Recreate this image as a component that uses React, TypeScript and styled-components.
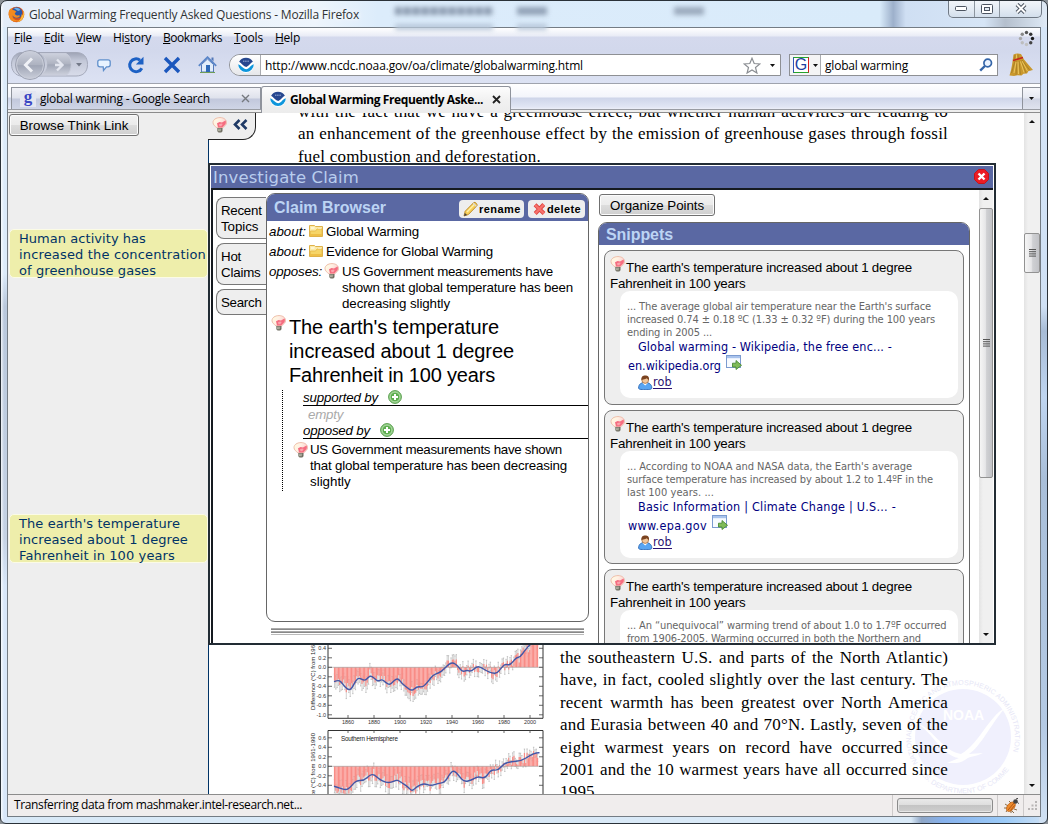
import React from "react";
import styled, { createGlobalStyle, css } from "styled-components";

const GlobalStyle = createGlobalStyle`
  *, *::before, *::after { box-sizing: border-box; }
  body { margin: 0; background: #8a9096; overflow: hidden; }
  svg { display: block; flex: none; }
`;

const arial = `"Liberation Sans", Arial, sans-serif`;
const segoe = `"Open Sans", "Segoe UI", sans-serif`;
const verdana = `"DejaVu Sans", Verdana, sans-serif`;
const tahoma = `"DejaVu Sans Condensed", Tahoma, sans-serif`;
const georgia = `"Liberation Serif", Georgia, serif`;

/* A run of text with its own tracking. */
const Txt = styled.span<{ $ls?: number }>`
  white-space: nowrap;
  letter-spacing: ${(p) => p.$ls ?? 0}px;
`;

/* ---------- window frame ---------- */

const Window = styled.div`
  width: 1048px;
  height: 824px;
  display: flex;
  flex-direction: column;
  border: 1px solid #2a3138;
  border-radius: 7px 7px 6px 6px;
  overflow: hidden;
  padding: 0 6px 6px;
  font-family: ${segoe};
  font-size: 12px;
  color: #000;
  background:
    linear-gradient(90deg, rgba(255, 255, 255, 0.8), rgba(255, 255, 255, 0) 3px) no-repeat,
    linear-gradient(180deg, #dcebfa 0, #dcebfa 30%, #b9c8dc 34%, #c5d2e4 62%, #d8e7f9 68%, #d8e7f9) 0 26px / 7px 100% no-repeat,
    linear-gradient(180deg, #d6e6f8 0, #cfe0f4 34%, #a7bcd6 37%, #bfd5f0 45%, #a9bfd9 55%, #b4cae4 85%, #d8e7f7) 100% 26px / 8px 100% no-repeat,
    linear-gradient(90deg, #d9e9f7 0 87%, #8fa6c6 88%, #86b1ec 90%, #9ccbf8 96%, #cfe1f4) 0 100% / 100% 8px no-repeat,
    linear-gradient(90deg, #e3ecf8 0, #eef5fc 30%, #dcecfb 36%, #d9ebfa 84%, #9db0cb 85.3%, #cfdff3 86.5%, #d6e5f6 94%, #b4bfcd 96%, #dfeaf6);
`;

const TitleBar = styled.div`
  position: relative;
  height: 26px;
  flex: none;
  display: flex;
  align-items: center;
  padding-left: 1px;
  gap: 4px;
  color: #2f3336;
`;

const Smudge = styled.i<{ $x: number; $y: number; $w: number; $h: number; $c: string }>`
  position: absolute;
  left: ${(p) => p.$x}px;
  top: ${(p) => p.$y}px;
  width: ${(p) => p.$w}px;
  height: ${(p) => p.$h}px;
  background: ${(p) => p.$c};
  filter: blur(2.5px);
`;

const TitleText = styled(Txt)`
  position: relative;
  text-shadow: 0 0 5px #fff, 0 0 8px #fff;
`;

const WindowButtons = styled.div`
  position: absolute;
  right: -1px;
  top: -1px;
  height: 18px;
  display: flex;
  border: 1px solid #6f7985;
  border-top: 0;
  border-radius: 0 0 5px 5px;
  background: linear-gradient(180deg, #f3f6fa, #e5ecf4 50%, #d3dfec);
  box-shadow: 0 0 1px #fff;
`;

const WindowButton = styled.span<{ $w: number }>`
  width: ${(p) => p.$w}px;
  display: grid;
  place-items: center;
  & + & { border-left: 1px solid #8c959f; }
`;

const Client = styled.div`
  flex: 1;
  min-height: 0;
  border: 1px solid #747c84;
  display: flex;
  flex-direction: column;
  background: #fff;
`;

/* ---------- menus and toolbar ---------- */

const MenuBar = styled.div`
  height: 22px;
  flex: none;
  display: flex;
  align-items: center;
  padding: 0 0 2px 6px;
  background: linear-gradient(180deg, #fff 0, #e9ecf6 8px, #d4d9ed 9px, #d2d8ec);
`;

const MenuItem = styled(Txt)<{ $w: number }>`
  width: ${(p) => p.$w}px;
  line-height: 20px;
  u { text-underline-offset: 1px; }
`;

const Toolbar = styled.div`
  height: 33px;
  flex: none;
  display: flex;
  align-items: center;
  padding: 0 4px 3px 2px;
  background: linear-gradient(180deg, #d2d8ec, #dce2f3);
`;

const Slot = styled.span<{ $l?: number }>`
  margin-left: ${(p) => p.$l ?? 0}px;
  flex: none;
`;

const AddressBox = styled.div`
  margin-left: 12px;
  width: 552px;
  height: 22px;
  flex: none;
  display: flex;
  align-items: center;
  border: 1px solid #8e9094;
  border-radius: 12px 0 0 12px;
  background: #fff;
  overflow: hidden;
`;

const SiteBadge = styled.span`
  width: 31px;
  height: 20px;
  display: grid;
  place-items: center;
  padding-left: 2px;
  border-right: 1px solid #a9abb0;
  background: linear-gradient(180deg, #fff, #e6e7ea);
`;

const Url = styled(Txt)`
  flex: 1;
  padding-left: 4px;
`;

const SearchBox = styled.div`
  margin-left: 8px;
  width: 209px;
  height: 22px;
  flex: none;
  display: flex;
  align-items: center;
  border: 1px solid #8e9094;
  background: #fff;
`;

const EnginePicker = styled.span`
  width: 31px;
  height: 20px;
  display: flex;
  align-items: center;
  gap: 4px;
  padding-left: 3px;
  border-right: 1px solid #a9abb0;
  background: #f4f4f5;
`;

const EngineLogo = styled.span`
  width: 16px;
  height: 16px;
  border: 1px solid #27a32c;
  border-right-color: #d81f1f;
  border-left-color: #2f55b8;
  background: #fff;
  color: #1d3fa0;
  font: 16px/14px ${arial};
  text-align: center;
`;

/* ---------- tabs ---------- */

const TabStrip = styled.div`
  height: 30px;
  flex: none;
  display: flex;
  align-items: flex-start;
  border-top: 1px solid #9fa3ad;
  border-bottom: 1px solid #8c8c8c;
  padding-left: 3px;
  background: linear-gradient(180deg, #fff 0, #f3f5fb 13px, #ced5e9 14px, #e1e6f4 23px, #eceff8 25px, #999ca3 25px, #999ca3 26px, #eeeeee 26px);
`;

const Tab = styled.div<{ $active?: boolean }>`
  display: flex;
  align-items: center;
  width: 250px;
  border: 1px solid #8f939c;
  border-bottom: 0;
  ${(p) =>
    p.$active
      ? css`
          height: 27px;
          margin-top: 2px;
          padding: 0 9px 2px 8px;
          border-radius: 3px 3px 0 0;
          font-weight: bold;
          background: linear-gradient(180deg, #fdfdfd, #f1f1f1 50%, #ececec);
        `
      : css`
          height: 22px;
          margin-top: 3px;
          padding: 0 10px 0 8px;
          background: linear-gradient(180deg, #f1f2f7, #dfe2ec 10px, #c2c8dc 11px, #cfd5e6);
        `}
`;

const TabLabel = styled(Txt)`
  flex: 1;
  padding-left: 4px;
`;

const TabIcon = styled.span<{ $tile?: boolean }>`
  width: 16px;
  height: 16px;
  ${(p) =>
    p.$tile &&
    css`
      background: #e4e6f0;
      color: #3b46c4;
      font: bold 17px/12px ${georgia};
      text-align: center;
    `}
`;

const AllTabs = styled.span`
  margin: 3px 0 0 auto;
  width: 18px;
  height: 22px;
  display: grid;
  place-items: center;
  border: 1px solid #8f939c;
  border-right: 0;
  border-bottom: 0;
  background: linear-gradient(180deg, #f6f7fb, #e6e9f2 10px, #d0d5e4 11px, #dfe3ee);
`;

/* ---------- page ---------- */

const Page = styled.div`
  position: relative;
  flex: 1;
  min-height: 0;
  display: flex;
  background: #fff;
`;

const Sidebar = styled.aside`
  width: 200px;
  flex: none;
  padding: 1px 0 0 1px;
  background: #eee;
`;

const NativeButton = styled.button<{ $w: number }>`
  display: block;
  width: ${(p) => p.$w}px;
  height: 22px;
  padding: 2px 0 0;
  border: 1px solid #707070;
  border-radius: 3px;
  box-shadow: inset 0 0 0 1px #fcfcfc;
  background: linear-gradient(180deg, #f2f2f2, #ebebeb 50%, #ddd 50%, #cfcfcf);
  font: 13.333px/18px ${arial};
  color: #000;
`;

const Note = styled.div<{ $gap: number }>`
  margin-top: ${(p) => p.$gap}px;
  width: 199px;
  height: 49px;
  padding: 1px 0 0 9px;
  display: flex;
  flex-direction: column;
  border: 1px solid #fbfbe6;
  border-radius: 5px;
  background: #eeeeab;
  color: #003366;
  font: 13px/16px ${verdana};
`;

const Article = styled.main`
  position: relative;
  width: 816px;
  flex: none;
  overflow: hidden;
  border-left: 1px solid #003366;
  padding-left: 89px;
  display: flex;
  flex-direction: column;
  font: 17px/22.4px ${georgia};
`;

const SidebarToggle = styled.div`
  position: absolute;
  left: 200px;
  top: 0;
  width: 48px;
  height: 27px;
  display: flex;
  align-items: center;
  gap: 5px;
  padding: 0 0 3px 4px;
  border-right: 1px solid #222;
  border-bottom: 1px solid #222;
  border-radius: 0 0 13px 0;
  background: #eee;
`;

const Lead = styled.div`
  margin-top: -12px;
  width: 650px;
  height: 543px;
  flex: none;
`;

const Line = styled.div<{ $last?: boolean }>`
  position: relative;
  letter-spacing: 0.2px;
  white-space: nowrap;
  text-align: justify;
  text-align-last: ${(p) => (p.$last ? "left" : "justify")};
`;

const FigureRow = styled.div`
  flex: none;
  display: flex;
  margin-left: -8px;
`;

const Column = styled.div`
  width: 388px;
  margin-left: 8px;
  padding-top: 3px;
`;

const Watermark = styled.div`
  position: absolute;
  left: 695px;
  top: 565px;
`;

const ScrollBar = styled.div<{ $w: number }>`
  width: ${(p) => p.$w}px;
  flex: none;
  display: flex;
  flex-direction: column;
  justify-content: space-between;
  align-items: center;
  background: linear-gradient(90deg, #e3e3e3, #f0f0f0 4px, #f0f0f0);
`;

const ScrollTrack = styled.div<{ $offset: number }>`
  flex: 1;
  width: 100%;
  padding-top: ${(p) => p.$offset}px;
`;

const ScrollThumb = styled.div<{ $h: number }>`
  height: ${(p) => p.$h}px;
  width: 100%;
  display: grid;
  place-items: center;
  border: 1px solid #929292;
  border-radius: 2px;
  background: linear-gradient(90deg, #f5f5f5, #e6e6e8 45%, #cfd0d3 55%, #c2c3c7);
`;

const ArrowCell = styled.span<{ $h: number }>`
  height: ${(p) => p.$h}px;
  display: grid;
  place-items: center;
`;

const StatusBar = styled.div`
  height: 22px;
  flex: none;
  display: flex;
  align-items: stretch;
  border-top: 1px solid #8c8c8c;
  background: #f0eded;
  line-height: 19px;
`;

const StatusText = styled(Txt)`
  flex: 1;
  padding-left: 6px;
`;

const StatusCell = styled.span<{ $w: number }>`
  width: ${(p) => p.$w}px;
  display: grid;
  place-items: center;
  border-left: 1px solid #cdcaca;
`;

const ProgressBar = styled.span`
  width: 96px;
  height: 15px;
  margin-bottom: 1px;
  border: 1px solid #8b8b8b;
  border-radius: 3px;
  box-shadow: inset 0 0 0 1px #e6e6e6;
  background: linear-gradient(180deg, #e9e9e9, #dedede 45%, #c4c4c4 50%, #cecece);
`;

/* ---------- claim dialog ---------- */

const Dialog = styled.section`
  position: absolute;
  left: 200px;
  top: 50px;
  width: 788px;
  height: 482px;
  display: flex;
  flex-direction: column;
  padding: 1px 1px 0;
  border: 2px solid #222c34;
  background: #fff;
  font: 13.333px/16px ${arial};
`;

const DialogTitle = styled.header`
  height: 22px;
  flex: none;
  display: flex;
  align-items: center;
  justify-content: space-between;
  padding: 0 4px 0 2px;
  background: #5a68a3;
  color: #b9cdee;
  font: 16.5px/22px ${verdana};
`;

const DialogBody = styled.div`
  flex: 1;
  min-height: 0;
  display: flex;
  border: solid #151a20;
  border-width: 2px 0 0 2px;
`;

const SideTabs = styled.nav`
  width: 53px;
  flex: none;
  padding: 7px 0 0 3px;
  display: flex;
  flex-direction: column;
  gap: 4px;
`;

const SideTab = styled.div`
  display: flex;
  flex-direction: column;
  padding: 5px 0 3px 4px;
  border: 1px solid #777;
  border-right: 0;
  border-radius: 8px 0 0 8px;
  background: #eee;
`;

const BrowserColumn = styled.div`
  width: 323px;
  flex: none;
  padding-top: 3px;
`;

const Panel = styled.div<{ $h?: number }>`
  height: ${(p) => (p.$h ? p.$h + "px" : "auto")};
  border: 1px solid #666;
  border-radius: 9px;
  overflow: hidden;
  background: #fff;
`;

const PanelHead = styled.div<{ $h: number; $t?: number }>`
  height: ${(p) => p.$h}px;
  display: flex;
  align-items: center;
  gap: 4px;
  padding: ${(p) => p.$t ?? 0}px 3px 0 7px;
  background: #5a68a3;
  color: #bcd4f4;
  font-size: 16px;
  font-weight: bold;
`;

const PanelTitle = styled(Txt)`
  flex: 1;
`;

const HeadButton = styled.span<{ $w: number }>`
  width: ${(p) => p.$w}px;
  height: 18px;
  margin-top: 3px;
  display: flex;
  align-items: center;
  padding-left: 4px;
  border-radius: 4px;
  background: #eee;
  color: #000;
  font-size: 11px;
  line-height: 16px;
`;

const Relation = styled.div<{ $h: number }>`
  height: ${(p) => p.$h}px;
  display: flex;
  padding: 3px 0 0 2px;
`;

const RelationName = styled(Txt)<{ $w: number }>`
  width: ${(p) => p.$w}px;
  font-style: italic;
`;

const Stack = styled.span<{ $l?: number }>`
  display: flex;
  flex-direction: column;
  align-items: flex-start;
  padding-left: ${(p) => p.$l ?? 0}px;
`;

const Claim = styled.div`
  display: flex;
  padding: 2px 0 0 4px;
  font-size: 20px;
  line-height: 24px;
`;

const Arguments = styled.div`
  margin: 3px 0 0 15px;
  height: 101px;
  border-left: 1px dotted #000;
`;

const ArgumentHead = styled.div<{ $h: number }>`
  margin-left: 20px;
  height: ${(p) => p.$h}px;
  display: flex;
  align-items: flex-end;
  gap: 10px;
  border-bottom: 1px solid #000;
  font-style: italic;
  line-height: 14px;
`;

const Empty = styled.div`
  height: 17px;
  padding-left: 25px;
  color: #aaa;
  font-style: italic;
  line-height: 18px;
`;

const ArgumentClaim = styled.div`
  display: flex;
  padding: 3px 0 0 10px;
`;

const Grip = styled.div`
  margin: 6px 5px 0;
  height: 7px;
  background: linear-gradient(180deg, #aaa 0 1px, #888 1px 2px, #fff 2px 3px, #aaa 3px 4px, #888 4px 5px, #fff 5px 6px, #bbb 6px);
`;

const SnippetColumn = styled.div`
  flex: 1;
  min-width: 0;
  overflow: hidden;
  padding: 4px 9px 0;
`;

const ButtonRow = styled.div`
  height: 28px;
  padding-left: 1px;
`;

const Cards = styled.div`
  display: flex;
  flex-direction: column;
  gap: 5px;
  padding: 5px 5px 0;
`;

const Card = styled.article<{ $h: number }>`
  height: ${(p) => p.$h}px;
  padding: 9px 5px 0;
  border: 1px solid #777;
  border-radius: 8px;
  background: #eee;
  display: flex;
  flex-direction: column;
`;

const CardTitle = styled.div`
  display: flex;
  height: 16px;
`;

const Quote = styled.div`
  height: 107px;
  margin: -1px 0 0 10px;
  padding: 9px 0 0 7px;
  border-radius: 10px;
  background: #fff;
  display: flex;
  flex-direction: column;
  font-family: ${tahoma};
  color: #666;
  font-size: 11px;
  line-height: 13px;
`;

const Source = styled.div<{ $h: number; $l: number }>`
  height: ${(p) => p.$h}px;
  padding-left: ${(p) => p.$l}px;
  display: flex;
  align-items: flex-end;
  color: #000080;
  font-size: 12.5px;
  line-height: 16px;
  u { color: #2b1170; text-underline-offset: 2px; }
`;

const Lift = styled.span<{ $t?: number; $b?: number; $l?: number; $r?: number }>`
  margin: ${(p) => p.$t ?? 0}px ${(p) => p.$r ?? 0}px ${(p) => p.$b ?? 0}px ${(p) => p.$l ?? 0}px;
  flex: none;
`;

/* ---------- icons ---------- */

const Bulb = () => (
  <svg width="16" height="16" viewBox="0 0 16 16">
    <defs>
      <linearGradient id="glass" x1="0" y1=".2" x2="1" y2=".6">
        <stop offset="0" stopColor="#fffbe0" />
        <stop offset=".45" stopColor="#fff0e4" />
        <stop offset="1" stopColor="#fbc9c9" />
      </linearGradient>
    </defs>
    <path d="M8 .6C4 .6 1 2.700 1 5.500c0 2.500 1.900 3.500 3.900 5.300h5.800c1.700-1.800 3.800-2.700 3.800-5.300C14.500 2.600 11.800.6 8 .6z" fill="url(#glass)" stroke="#ecb7a4" strokeWidth=".9" />
    <path d="M5 6.200l2.600-1.100 2.400.5 3.500-2c.9 1.800.3 3.500-.9 4.500L10.300 10.600H6z" fill="#f56d80" />
    <path d="M7 7.200l2.300-.6 1.400.5-1.400 2.200H7.500z" fill="#fba5ad" />
    <path d="M5.300 11h5.200v3.200l-1.200 1.300H6.600l-1.300-1.300z" fill="#6e6d60" />
    <path d="M5.800 12.200h3.400M5.800 13.700h3" stroke="#cfcfbf" strokeWidth=".8" />
  </svg>
);

const Folder = () => (
  <svg width="14" height="12" viewBox="0 0 14 12">
    <path d="M.5.500h5l1 1h7v10H.5z" fill="#fbeaa6" stroke="#dfb14a" />
    <path d="M2 3h3.500M9 3.500h3" stroke="#fff" />
    <path d="M1.500 6h5l1.500-2h5v7h-11.500z" fill="#f6d568" stroke="#e2b443" strokeWidth=".7" />
    <path d="M1 9h12v2H1z" fill="#eebf48" />
  </svg>
);

const Plus = () => (
  <svg width="14" height="14" viewBox="0 0 14 14">
    <circle cx="7" cy="7" r="6.400" fill="#8cc97e" stroke="#5a9f50" />
    <circle cx="7" cy="7" r="4.900" fill="#5eae50" stroke="#b9e0b0" strokeWidth=".9" />
    <path d="M7 4v6M4 7h6" stroke="#fff" strokeWidth="2" />
  </svg>
);

const Pencil = () => (
  <svg width="16" height="16" viewBox="0 0 16 16">
    <path d="M1 15l1.200-4.800L10.800 1.500c1.300-.8 3.900 1.600 3.200 3.200L5.400 13.500z" fill="#f7cf57" stroke="#b98522" strokeWidth=".9" />
    <path d="M4 11L11.500 3.200" stroke="#fff0a8" strokeWidth="1.400" />
    <path d="M10.200 2.200l3.200 3.200" stroke="#d8d8d8" strokeWidth="1.300" />
    <path d="M1 15l.9-3 2.200 2.100z" fill="#444" />
  </svg>
);

const RedCross = () => (
  <svg width="15" height="14" viewBox="0 0 15 14">
    <path d="M3 2.800l9 8.700M11.800 2.500l-8.600 9" stroke="#dc4540" strokeWidth="4" />
    <path d="M3 2.800l9 8.700M11.800 2.500l-8.600 9" stroke="#f8726c" strokeWidth="2.400" />
  </svg>
);

const CloseBadge = () => (
  <svg width="15" height="15" viewBox="0 0 15 15">
    <path d="M4.500.5h6l4 4v6l-4 4h-6l-4-4v-6z" fill="#ec1c24" stroke="#c4141c" />
    <path d="M4.500 4.500l6 6M10.500 4.500l-6 6" stroke="#fff" strokeWidth="2.400" />
  </svg>
);

const OpenPage = () => (
  <svg width="16" height="15" viewBox="0 0 16 15">
    <rect x=".5" y=".5" width="14" height="12" fill="#f7fbff" stroke="#7b9bd0" />
    <path d="M1 1h13v2.200H1z" fill="#a9c3ec" />
    <path d="M6.500 8.200h3.500V5.500l5.500 4.800-5.500 4.200V12H6.500z" fill="#7fbb58" stroke="#4a8a35" strokeWidth=".9" />
  </svg>
);

const Person = () => (
  <svg width="15" height="15" viewBox="0 0 15 15">
    <path d="M.6 13c0-3.800 2.500-5.500 6.400-5.500s6.800 1.700 6.800 5.500c0 1.400-1.800 1.600-6.600 1.600S.6 14.400.6 13z" fill="#5aa5f2" stroke="#2c68b4" strokeWidth=".9" />
    <path d="M4.500 8l2.700 2.500L9.900 8z" fill="#fff" />
    <circle cx="7.200" cy="5" r="3.400" fill="#f3c79b" stroke="#9b6236" strokeWidth=".7" />
    <path d="M3.400 5C3 1.800 4.800.4 7.300.4S11.500 1.800 11 5C9.600 4.300 9 3.200 9 3.200S6 4.300 3.400 5z" fill="#7b4320" />
  </svg>
);

const Noaa = ({ size = 16 }: { size?: number }) => (
  <svg width={size} height={size} viewBox="0 0 16 16">
    <circle cx="8" cy="8" r="7.900" fill="#fff" />
    <path d="M1.100 4.800a7.800 7.800 0 0 1 13.800 0C12.500 6 11.300 8.600 8.300 10 5.800 9.600 3.200 6 1.100 4.800z" fill="#26478f" />
    <path d="M.2 7.200C3 8 5.200 12 8.300 12.200c2.800 0 3.800-3.900 7.500-5A7.800 7.800 0 1 1 .2 7.200z" fill="#0e96dc" />
    <path d="M5 4.200h6" stroke="#9fb4de" strokeWidth="1" strokeDasharray="1.200 .5" />
  </svg>
);

const Firefox = () => (
  <svg width="17" height="17" viewBox="0 0 17 17">
    <circle cx="8.500" cy="8.500" r="7.800" fill="#d9541a" />
    <circle cx="8.800" cy="6.800" r="5.500" fill="#2b59a8" />
    <path d="M6 2.200c2-.8 5-.3 6.500 1.800L10 5z" fill="#6fb1e8" />
    <path d="M1 4.500C2 3 3 2.200 3.600 2.200L4.600 4c1.500-.3 2.600.6 4 1.800L6.800 7c0 2 1.600 2.800 3.300 2.400 1.200-.3 2.400.3 1.400 1.400C10 12.300 6.300 12.200 4.600 9.400 4.200 13 8 15 11.200 14 9 16.500 4 16.200 1.800 12.500.5 10 .3 7 1 4.500z" fill="#f28a1e" />
    <path d="M14.500 3.500c2 3 2 7-.2 9.800-1.300 1.700-3.500 2.800-5.600 2.700 3-1.200 5.200-3.800 4.900-7.700.9.700 1 1 1.200 1.500.4-2.200.3-4.300-.3-6.300z" fill="#fac33c" />
  </svg>
);

const BackForward = () => (
  <svg width="79" height="32" viewBox="0 0 79 32">
    <defs>
      <linearGradient id="pill" x2="0" y2="1">
        <stop offset="0" stopColor="#9ea4b5" />
        <stop offset=".35" stopColor="#c3c8d8" />
        <stop offset="1" stopColor="#d8dcea" />
      </linearGradient>
      <linearGradient id="disc" x2="0" y2="1">
        <stop offset="0" stopColor="#cdd1dd" />
        <stop offset=".5" stopColor="#adb2c0" />
        <stop offset=".52" stopColor="#a0a6b6" />
        <stop offset="1" stopColor="#ccd0dc" />
      </linearGradient>
    </defs>
    <path d="M12 3.500h54c8 0 11.500 5 11.500 12s-4 11.500-11.500 11.500H12C-2 27-2 3.500 12 3.500z" fill="url(#pill)" stroke="#a4a9ba" />
    <path d="M30 4.500h26c7 3 7 19 0 21.500H30c9-4 9-17 0-21.500z" fill="url(#disc)" stroke="#c9cddb" />
    <circle cx="20" cy="16" r="14.500" fill="url(#disc)" stroke="#9da2b2" />
    <circle cx="20" cy="16" r="13.400" fill="none" stroke="#c9cdd9" />
    <path d="M22 9.500L15.500 16l6.500 6.500" fill="none" stroke="#eff1f6" strokeWidth="3" />
    <path d="M47 10.500l5.500 5.500-5.500 5.500M45 16h6" fill="none" stroke="#e3e6ef" strokeWidth="2.400" />
    <path d="M66 14h6l-3 3.500z" fill="#737988" />
  </svg>
);

const Bubble = () => (
  <svg width="14" height="13" viewBox="0 0 14 13">
    <path d="M3 .8h8c1.400 0 2.200.8 2.200 2v3c0 1.300-.8 2-2.200 2H9.500L6.500 11.500 6.200 7.800H3C1.600 7.800.8 7 .8 5.800v-3C.8 1.600 1.600.8 3 .8z" fill="#e8f3ff" stroke="#5f8fcb" strokeWidth="1.300" />
  </svg>
);

const Reload = () => (
  <svg width="18" height="18" viewBox="0 0 18 18">
    <path d="M14.800 12.200A6.400 6.400 0 1 1 13 4.200" fill="none" stroke="#1d61c4" strokeWidth="3" />
    <path d="M16.500.8v7.700H8.800z" fill="#1d61c4" />
  </svg>
);

const Stop = () => (
  <svg width="18" height="18" viewBox="0 0 18 18">
    <path d="M2 2l14 14M16 2L2 16" stroke="#1b57bd" strokeWidth="3.400" />
  </svg>
);

const Home = () => (
  <svg width="19" height="18" viewBox="0 0 19 18">
    <path d="M3.500 8.500V16h12V8.500l-6-5.500z" fill="#e2edfa" stroke="#5378b8" />
    <path d="M.8 9.800l8.700-8.600 8.700 8.600" fill="none" stroke="#5b86c8" strokeWidth="1.800" />
    <path d="M13.500 1.500h2v4l-2-2z" fill="#5378b8" />
    <path d="M8 9h4v7H8z" fill="#2e69b8" />
    <path d="M2 16.500h15" stroke="#6f9d55" />
  </svg>
);

const Star = () => (
  <svg width="18" height="17" viewBox="0 0 18 17">
    <path d="M9 1.200l2.200 5.300 5.700.4-4.400 3.600 1.400 5.500L9 13l-4.900 3 1.400-5.500L1.100 6.900l5.700-.4z" fill="#fff" stroke="#8b8e93" strokeWidth="1.200" />
  </svg>
);

const Caret = ({ size = 5, up, color = "#111" }: { size?: number; up?: boolean; color?: string }) => (
  <svg width={size} height="3" viewBox="0 0 6 3" preserveAspectRatio="none">
    <path d={up ? "M0 3h6L3 0z" : "M0 0h6L3 3z"} fill={color} />
  </svg>
);

const Magnifier = () => (
  <svg width="14" height="14" viewBox="0 0 14 14">
    <circle cx="8.700" cy="5" r="3.800" fill="#eaf3ff" stroke="#3465a8" strokeWidth="1.700" />
    <path d="M5.900 8L1.200 12.600" stroke="#3465a8" strokeWidth="2.400" />
  </svg>
);

const Broom = () => (
  <svg width="25" height="24" viewBox="0 0 25 24">
    <path d="M4.500 1.500C7 .2 9.500.2 12 1l3 5.500 9 10.500-4.500 1.100-1.500 2.400-3.500.2-2 1.800-4-.3-3.500.8-4.500-.5C3 15 3.500 8 4.500 1.500z" fill="#c9982d" />
    <path d="M6 8L2.500 20M8 8L7 22M10 8l1.500 13.500M12 7.500l5 12.500M13 7l8 10.500M6 2l-.5 4M9 1.500l.5 4" stroke="#9a7320" strokeWidth=".6" />
    <path d="M7 9l-2 11M9 8.500L9.500 21M11.500 8.500l3.500 11M13 8l5.500 10M7.500 1.500v4" stroke="#edca62" strokeWidth=".9" />
    <path d="M4 7.500l10-3" stroke="#c5261c" strokeWidth="1.500" />
  </svg>
);

const spinnerShades = ["#555", "#333", "#1a1a1a", "#444", "#c2c2c2", "#bdbdbd", "#aaa", "#888"];
const Spinner = () => (
  <svg width="17" height="17" viewBox="0 0 17 17">
    {spinnerShades.map((shade, i) => {
      const a = (i * Math.PI) / 4 - Math.PI / 2;
      return <circle key={i} cx={8.500 + 6 * Math.cos(a)} cy={8.500 + 6 * Math.sin(a)} r="1.700" fill={shade} />;
    })}
  </svg>
);

const TabX = ({ dark }: { dark?: boolean }) => (
  <svg width="9" height="9" viewBox="0 0 9 9">
    <path d="M1 1l7 7M8 1L1 8" stroke={dark ? "#222" : "#75797f"} strokeWidth={dark ? 1.800 : 1.400} />
  </svg>
);

const DoubleChevron = () => (
  <svg width="15" height="11" viewBox="0 0 15 11">
    <path d="M6.500 1L2 5.500 6.500 10M13.500 1L9 5.500l4.500 4.500" fill="none" stroke="#1f3a66" strokeWidth="2.600" />
  </svg>
);

const GripLines = () => (
  <svg width="7" height="8" viewBox="0 0 7 8">
    <path d="M0 .5h7M0 2.700h7M0 4.900h7M0 7.100h7" stroke="#555" strokeWidth="1" />
  </svg>
);

const Bug = () => (
  <svg width="16" height="16" viewBox="0 0 16 16">
    <path d="M2 6l3 2M1 10h3M3 14l2-3M8 15l0-3M6 3l2 2M11 11l3 1M9 13l2 2" stroke="#8b6b45" strokeWidth="1" />
    <path d="M3.500 11.500C3 8.500 6 4.500 9.500 4c2.500 0 3.500 2 2.500 4.500s-3.500 4.800-6 5c-1.500 0-2.300-.8-2.500-2z" fill="#ee8a2c" stroke="#b85e14" strokeWidth=".7" />
    <path d="M5 12l6-7M7.500 12.500l4-5" stroke="#a04a10" strokeWidth=".8" />
    <circle cx="12.500" cy="3.500" r="2.300" fill="#444" />
    <path d="M13 1l2-.5M14.500 4.500l1.300 1" stroke="#333" />
  </svg>
);

const ResizeGrip = () => (
  <svg width="11" height="11" viewBox="0 0 11 11">
    <path d="M8 1h2v2H8zM8 4.500h2v2H8zM4.500 4.500h2v2h-2zM8 8h2v2H8zM4.500 8h2v2h-2zM1 8h2v2H1z" fill="#b8b5b5" />
  </svg>
);

/* ---------- temperature charts ---------- */

type Pt = [number, number];

/* Smoothed anomaly curves: x in chart pixels, y in degrees Celsius. */
const northern: Pt[] = [
  [44, -0.3], [48, -0.27], [51, -0.3], [55, -0.42], [59, -0.48], [62, -0.44], [66, -0.27], [69, -0.22], [73, -0.27], [76, -0.27],
  [80, -0.17], [84, -0.22], [88, -0.3], [92, -0.25], [96, -0.33], [100, -0.37], [104, -0.28], [108, -0.23], [112, -0.34],
  [117, -0.43], [122, -0.5], [127, -0.4], [133, -0.42], [138, -0.3], [143, -0.16], [149, -0.12], [154, -0.04], [159, 0.07],
  [163, 0.1], [168, 0.03], [172, -0.1], [177, -0.06], [181, -0.09], [187, 0.02], [191, 0], [196, -0.07], [202, -0.12],
  [207, -0.13], [211, -0.02], [215, 0.07], [220, 0.04], [226, 0.2], [230, 0.21], [235, 0.36], [240, 0.48], [244, 0.54], [248, 0.62], [252, 0.66],
];
const southern: Pt[] = [
  [44, -0.42], [50, -0.46], [56, -0.5], [60, -0.45], [66, -0.3], [74, -0.3], [80, -0.18], [84, -0.17], [89, -0.27], [96, -0.34],
  [101, -0.34], [107, -0.28], [112, -0.35], [118, -0.43], [122, -0.53], [127, -0.42], [134, -0.36], [141, -0.41], [148, -0.36],
  [155, -0.34], [160, -0.15], [164, -0.08], [169, -0.2], [174, -0.33], [182, -0.29], [188, -0.21], [195, -0.26], [201, -0.07],
  [208, -0.09], [214, 0.06], [220, 0.09], [232, 0.12], [240, 0.23], [247, 0.29], [252, 0.28],
];

const sample = (pts: Pt[], x: number) => {
  const i = Math.max(1, pts.findIndex((p) => p[0] >= x));
  const [x0, y0] = pts[i - 1];
  const [x1, y1] = pts[i];
  return y0 + ((y1 - y0) * (x - x0)) / (x1 - x0);
};

const smooth = (pts: Pt[], y: (v: number) => number) => {
  let d = `M${pts[0][0]} ${y(pts[0][1])}`;
  for (let i = 1; i < pts.length - 1; i++) {
    d += `Q${pts[i][0]} ${y(pts[i][1])} ${(pts[i][0] + pts[i + 1][0]) / 2} ${y((pts[i][1] + pts[i + 1][1]) / 2)}`;
  }
  return d;
};

const noise = (n: number) => {
  const v = Math.sin(n * 12.9898) * 43758.5453;
  return v - Math.floor(v) - 0.5;
};

const Series = ({ pts, zero, seed }: { pts: Pt[]; zero: number; seed: number }) => {
  const y = (v: number) => zero - v * 47.500;
  const years = Array.from({ length: 156 }, (_, i) => i);
  return (
    <g>
      {years.map((i) => {
        const x = 44.500 + i * 1.31;
        const v = sample(pts, x) + noise(i + seed) * 0.26;
        const err = 0.14 - i * 0.0004;
        return (
          <g key={i}>
            <path d={`M${x} ${y(v + err)}V${y(v - err)}`} stroke="#d2d2d2" strokeWidth="1" />
            <path d={`M${x - 0.7} ${y(v + err)}h1.400M${x - 0.7} ${y(v - err)}h1.400`} stroke="#999" strokeWidth=".5" />
            <path d={`M${x} ${zero}V${y(v)}`} stroke="#f98c86" strokeWidth="1.200" />
          </g>
        );
      })}
      <path d={`M38 ${zero}H252`} stroke="#999" strokeWidth=".6" />
      <path d={smooth(pts, y)} fill="none" stroke="#4257a8" strokeWidth="1.400" />
    </g>
  );
};

const Ticks = ({ zero, values }: { zero: number; values: number[] }) => (
  <g fontFamily={arial} fontSize="5.500" fill="#333">
    {values.map((v) => {
      const y = zero - v * 47.500;
      return (
        <g key={v}>
          <path d={`M38 ${y}h4M249 ${y}h4`} stroke="#444" strokeWidth=".8" />
          <text x="36" y={y + 2} textAnchor="end">{v.toFixed(1)}</text>
        </g>
      );
    })}
  </g>
);

const decades = [1860, 1880, 1900, 1920, 1940, 1960, 1980, 2000];

const Charts = () => (
  <svg width="262" height="150" viewBox="0 0 262 150">
    <Series pts={northern} zero={23.300} seed={3} />
    <path d="M38 0V74.300H253V0" fill="none" stroke="#333" />
    <Ticks zero={23.300} values={[0.4, 0.2, 0, -0.2, -0.4, -0.6, -0.8, -1]} />
    <g fontFamily={arial} fontSize="5.500" fill="#333">
      {decades.map((d, i) => (
        <g key={d}>
          <path d={`M${58 + i * 26} 74v-3`} stroke="#444" strokeWidth=".8" />
          <text x={58 + i * 26} y="80" textAnchor="middle">{d}</text>
        </g>
      ))}
      <text transform="translate(25 66) rotate(-90)" fontSize="6" fill="#222">Difference (°C) from 1961-1990</text>
      <text transform="translate(25 173) rotate(-90)" fontSize="6" fill="#222" textLength="84">Difference (°C) from 1961-1990</text>
      <text x="51" y="97" fontSize="6.300" textLength="57" fill="#222">Southern Hemisphere</text>
    </g>
    <Series pts={southern} zero={122.300} seed={71} />
    <path d="M38 150V86.500H253V150" fill="none" stroke="#333" />
    <path d="M58 86v3M84 86v3M110 86v3M136 86v3M162 86v3M188 86v3M214 86v3M240 86v3" stroke="#444" strokeWidth=".8" />
    <Ticks zero={122.300} values={[0.6, 0.4, 0.2, 0, -0.2, -0.4]} />
  </svg>
);

const Seal = () => (
  <svg width="118" height="118" viewBox="0 0 118 118">
    <defs>
      <path id="sealTop" d="M14 85A52 52 0 1 1 104 85" />
      <path id="sealBottom" d="M14 93A56.500 56.500 0 0 0 104 93" />
    </defs>
    <circle cx="59" cy="59" r="48" fill="#f0f0fd" />
    <path d="M14 46c12 2 26 28 43 30 18-10 28-38 44-46-14 16-24 38-36 46l14-1c-8 4-14 3-18 7-6 4-10 3-18 3l12-5C38 78 28 54 14 46z" fill="#fff" />
    <g fontFamily={arial} fontSize="7" fill="#e6e6f6">
      <text letterSpacing=".15"><textPath href="#sealTop">NATIONAL OCEANIC AND ATMOSPHERIC ADMINISTRATION</textPath></text>
      <text><textPath href="#sealBottom" startOffset="2">U.S. DEPARTMENT OF COMMERCE</textPath></text>
      <text x="39" y="42" fontSize="14" fontWeight="bold" fill="#fff">NOAA</text>
    </g>
  </svg>
);

/* ---------- content ---------- */

type Words = [string, number];

const menus: [string, string, string, number, number][] = [
  ["", "F", "ile", 30, -0.25], ["", "E", "dit", 32, -0.33], ["", "V", "iew", 37, -0.3], ["Hi", "s", "tory", 50, -0.28],
  ["", "B", "ookmarks", 71, -0.46], ["", "T", "ools", 41, -0.16], ["", "H", "elp", 30, -0.24],
];

const notes: { gap: number; lines: Words[] }[] = [
  { gap: 93, lines: [["Human activity has", 0.05], ["increased the concentration", 0.16], ["of greenhouse gases", 0.09]] },
  { gap: 236, lines: [["The earth's temperature", 0.08], ["increased about 1 degree", 0.09], ["Fahrenheit in 100 years", 0.1]] },
];

const sideTabs: Words[][] = [[["Recent", -0.28], ["Topics", -0.05]], [["Hot", -0.25], ["Claims", -0.2]], [["Search", -0.28]]];

const snippets: { h: number; quote: Words[]; title?: Words; host?: Words }[] = [
  {
    h: 155,
    quote: [
      ["... The average global air temperature near the Earth's surface", -0.121],
      ["increased 0.74 ± 0.18 ºC (1.33 ± 0.32 ºF) during the 100 years", -0.102],
      ["ending in 2005 ...", -0.112],
    ],
    title: ["Global warming - Wikipedia, the free enc... -", 0.138],
    host: ["en.wikipedia.org", 0.013],
  },
  {
    h: 154,
    quote: [
      ["... According to NOAA and NASA data, the Earth's average", -0.055],
      ["surface temperature has increased by about 1.2 to 1.4ºF in the", -0.119],
      ["last 100 years. ...", 0.054],
    ],
    title: ["Basic Information | Climate Change | U.S... -", 0.234],
    host: ["www.epa.gov", 0.344],
  },
  {
    h: 154,
    quote: [
      ["... An “unequivocal” warming trend of about 1.0 to 1.7ºF occurred", -0.111],
      ["from 1906-2005. Warming occurred in both the Northern and", -0.154],
    ],
  },
];

const paragraph = [
  "the southeastern U.S. and parts of the North Atlantic)",
  "have, in fact, cooled slightly over the last century. The",
  "recent warmth has been greatest over North America",
  "and Eurasia between 40 and 70°N. Lastly, seven of the",
  "eight warmest years on record have occurred since",
  "2001 and the 10 warmest years have all occurred since",
];

const lines = (items: Words[]) => items.map(([text, ls]) => <Txt key={text} $ls={ls}>{text}</Txt>);

export default function App() {
  return (
    <Window>
      <GlobalStyle />
      <TitleBar>
        <Smudge $x={388} $y={6} $w={98} $h={8} $c="repeating-linear-gradient(90deg,#8796ab 0 6px,#b5c4d6 6px 9px)" />
        <Smudge $x={510} $y={6} $w={30} $h={8} $c="#91a1b6" />
        <Smudge $x={667} $y={6} $w={30} $h={8} $c="#9aa9bc" />
        <Smudge $x={388} $y={23} $w={98} $h={6} $c="#b6c6d8" />
        <Smudge $x={510} $y={23} $w={30} $h={6} $c="#b6c6d8" />
        <Firefox />
        <TitleText $ls={-0.179}>Global Warming Frequently Asked Questions - Mozilla Firefox</TitleText>
        <WindowButtons>
          <WindowButton $w={25}>
            <svg width="13" height="6"><rect x=".5" y=".5" width="11" height="4" rx="1" fill="#fff" stroke="#4c5461" /></svg>
          </WindowButton>
          <WindowButton $w={25}>
            <svg width="12" height="10">
              <rect x=".5" y=".5" width="11" height="9" rx="1" fill="#fff" stroke="#4c5461" />
              <rect x="3.500" y="3.500" width="5" height="3" fill="#e4ebf3" stroke="#4c5461" />
            </svg>
          </WindowButton>
          <WindowButton $w={42}>
            <svg width="12" height="11" viewBox="0 0 12 11">
              <path d="M2 1.500l8 8M10 1.500l-8 8" stroke="#4c5461" strokeWidth="4" />
              <path d="M2 1.500l8 8M10 1.500l-8 8" stroke="#fff" strokeWidth="2" />
            </svg>
          </WindowButton>
        </WindowButtons>
      </TitleBar>

      <Client>
        <MenuBar>
          {menus.map(([a, key, b, w, ls]) => (
            <MenuItem key={key + b} $w={w} $ls={ls}>{a}<u>{key}</u>{b}</MenuItem>
          ))}
          <Slot $l={713}><Spinner /></Slot>
        </MenuBar>
        <Toolbar>
          <BackForward />
          <Slot $l={8}><Bubble /></Slot>
          <Slot $l={16}><Reload /></Slot>
          <Slot $l={18}><Stop /></Slot>
          <Slot $l={17}><Home /></Slot>
          <AddressBox>
            <SiteBadge><Noaa /></SiteBadge>
            <Url $ls={-0.143}>http://www.ncdc.noaa.gov/oa/climate/globalwarming.html</Url>
            <Star />
            <Slot $l={9}><Caret /></Slot>
            <Slot $l={5} />
          </AddressBox>
          <SearchBox>
            <EnginePicker><EngineLogo>G</EngineLogo><Caret /></EnginePicker>
            <Url $ls={-0.2}>global warming</Url>
            <Magnifier />
            <Slot $l={4} />
          </SearchBox>
          <Slot $l={11}><Broom /></Slot>
        </Toolbar>
        <TabStrip>
          <Tab>
            <TabIcon $tile>g</TabIcon>
            <TabLabel $ls={-0.216}>global warming - Google Search</TabLabel>
            <TabX />
          </Tab>
          <Tab $active>
            <TabIcon><Noaa /></TabIcon>
            <TabLabel $ls={-0.405}>Global Warming Frequently Aske...</TabLabel>
            <TabX dark />
          </Tab>
          <AllTabs><Caret /></AllTabs>
        </TabStrip>

        <Page>
          <Sidebar>
            <NativeButton $w={130}><Txt>Browse Think Link</Txt></NativeButton>
            {notes.map((n) => <Note key={n.gap} $gap={n.gap}>{lines(n.lines)}</Note>)}
          </Sidebar>
          <Article>
            <Watermark><Seal /></Watermark>
            <Lead>
              <Line>with the fact that we have a greenhouse effect, but whether human activities are leading to</Line>
              <Line>an enhancement of the greenhouse effect by the emission of greenhouse gases through fossil</Line>
              <Line $last>fuel combustion and deforestation.</Line>
            </Lead>
            <FigureRow>
              <Charts />
              <Column>
                {paragraph.map((text) => <Line key={text}>{text}</Line>)}
                <Line $last>1995.</Line>
              </Column>
            </FigureRow>
          </Article>
          <ScrollBar $w={16}>
            <ArrowCell $h={17}><Caret up size={6} /></ArrowCell>
            <ScrollTrack $offset={103}><ScrollThumb $h={40}><GripLines /></ScrollThumb></ScrollTrack>
            <ArrowCell $h={17}><Caret size={6} /></ArrowCell>
          </ScrollBar>

          <SidebarToggle><Bulb /><DoubleChevron /></SidebarToggle>

          <Dialog>
            <DialogTitle><Lift $t={1}><Txt $ls={0.1}>Investigate Claim</Txt></Lift><Lift $b={2}><CloseBadge /></Lift></DialogTitle>
            <DialogBody>
              <SideTabs>
                {sideTabs.map((t) => <SideTab key={t[0][0]}>{lines(t)}</SideTab>)}
              </SideTabs>
              <BrowserColumn>
                <Panel $h={429}>
                  <PanelHead $h={27}>
                    <PanelTitle>Claim Browser</PanelTitle>
                    <HeadButton $w={65}><Pencil /><Txt $ls={0.45}>rename</Txt></HeadButton>
                    <HeadButton $w={57}><RedCross /><Txt $ls={0.37}>delete</Txt></HeadButton>
                  </PanelHead>
                  <Relation $h={20}>
                    <RelationName $w={40}>about:</RelationName>
                    <Lift $t={1} $r={3}><Folder /></Lift>
                    <Txt $ls={-0.147}>Global Warming</Txt>
                  </Relation>
                  <Relation $h={20}>
                    <RelationName $w={40}>about:</RelationName>
                    <Lift $t={1} $r={3}><Folder /></Lift>
                    <Txt $ls={-0.216}>Evidence for Global Warming</Txt>
                  </Relation>
                  <Relation $h={52}>
                    <RelationName $w={55} $ls={-0.137}>opposes:</RelationName>
                    <Lift $t={-1} $r={2}><Bulb /></Lift>
                    <Stack>
                      {lines([["US Government measurements have", -0.291], ["shown that global temperature has been", -0.18], ["decreasing slightly", -0.087]])}
                    </Stack>
                  </Relation>
                  <Claim>
                    <Bulb />
                    <Stack $l={2}>
                      {lines([["The earth's temperature", -0.122], ["increased about 1 degree", -0.077], ["Fahrenheit in 100 years", -0.18]])}
                    </Stack>
                  </Claim>
                  <Arguments>
                    <ArgumentHead $h={16}><Txt $ls={-0.17}>supported by</Txt><Lift $b={1}><Plus /></Lift></ArgumentHead>
                    <Empty><Txt $ls={-0.25}>empty</Txt></Empty>
                    <ArgumentHead $h={16}><Txt $ls={-0.19}>opposed by</Txt><Lift $b={1}><Plus /></Lift></ArgumentHead>
                    <ArgumentClaim>
                      <Bulb />
                      <Stack $l={1}>
                        {lines([["US Government measurements have shown", -0.277], ["that global temperature has been decreasing", -0.175], ["slightly", 0]])}
                      </Stack>
                    </ArgumentClaim>
                  </Arguments>
                </Panel>
                <Grip />
              </BrowserColumn>
              <SnippetColumn>
                <ButtonRow><NativeButton $w={116}><Txt $ls={-0.05}>Organize Points</Txt></NativeButton></ButtonRow>
                <Panel $h={520}>
                  <PanelHead $h={22} $t={2}><PanelTitle $ls={-0.07}>Snippets</PanelTitle></PanelHead>
                  <Cards>
                    {snippets.map((s) => (
                      <Card key={s.quote[0][0]} $h={s.h}>
                        <CardTitle>
                          <Lift $t={-4}><Bulb /></Lift>
                          <Txt $ls={-0.223}>The earth's temperature increased about 1 degree</Txt>
                        </CardTitle>
                        <Txt $ls={-0.197}>Fahrenheit in 100 years</Txt>
                        <Quote>
                          {lines(s.quote)}
                          {s.title && s.host && (
                            <>
                              <Source $h={16} $l={11}><Txt $ls={s.title[1]}>{s.title[0]}</Txt></Source>
                              <Source $h={19} $l={1}>
                                <Txt $ls={s.host[1]}>{s.host[0]}</Txt>
                                <Lift $l={5} $b={4}><OpenPage /></Lift>
                              </Source>
                              <Source $h={16} $l={11}><Person /><u><Txt $ls={0.2}>rob</Txt></u></Source>
                            </>
                          )}
                        </Quote>
                      </Card>
                    ))}
                  </Cards>
                </Panel>
              </SnippetColumn>
              <ScrollBar $w={14}>
                <ArrowCell $h={17}><Caret up size={6} /></ArrowCell>
                <ScrollTrack $offset={1}><ScrollThumb $h={270}><GripLines /></ScrollThumb></ScrollTrack>
                <ArrowCell $h={17}><Caret size={6} /></ArrowCell>
              </ScrollBar>
            </DialogBody>
          </Dialog>
        </Page>

        <StatusBar>
          <StatusText $ls={-0.373}>Transferring data from mashmaker.intel-research.net...</StatusText>
          <StatusCell $w={105}><ProgressBar /></StatusCell>
          <StatusCell $w={26}><Bug /></StatusCell>
          <StatusCell $w={17}><ResizeGrip /></StatusCell>
        </StatusBar>
      </Client>
    </Window>
  );
}
